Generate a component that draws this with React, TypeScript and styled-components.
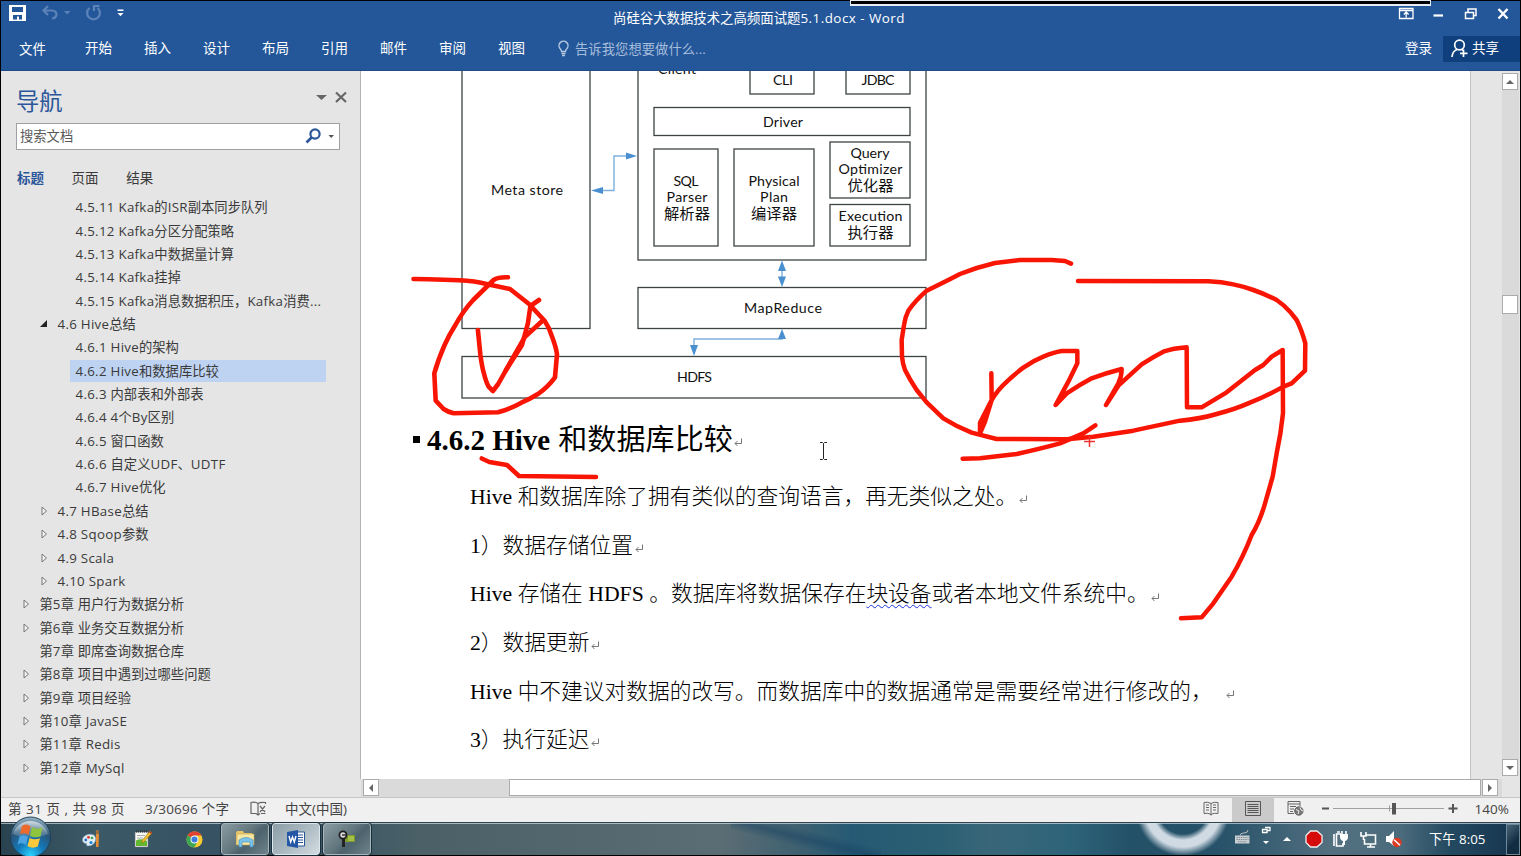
import React from 'react';
import styled, { createGlobalStyle } from 'styled-components';

const UI = '"Open Sans", "Noto Sans CJK SC", sans-serif';

const Global = createGlobalStyle`
  * { box-sizing: border-box; }
  body { margin: 0; background: #000; overflow: hidden; }
  svg { display: block; flex: none; }
`;

const Screen = styled.div`
  width: 1521px;
  height: 856px;
  padding: 1px;
  background: #000;
  display: flex;
  flex-direction: column;
  font-family: ${UI};
  font-size: 13.3px;
  color: #3a3a3a;
  white-space: nowrap;
  position: relative;
`;
const Latin = styled.span<{ $ls: number }>`
  letter-spacing: ${p => p.$ls}px;
  white-space: pre;
`;

/* ---------- header ---------- */
const Header = styled.header`
  height: 70px;
  flex: none;
  background: #24579a;
  border-bottom: 1px solid #1f4b86;
  color: #fff;
`;
const TitleBar = styled.div`
  height: 28px;
  display: flex;
  align-items: center;
  padding-left: 8px;
`;
const QuickAccess = styled.div`
  width: 604px;
  height: 28px;
  flex: none;
`;
const DocTitle = styled.div`
  width: 300px;
  padding-top: 5px;
  font-size: 13.4px;
  line-height: 20px;
`;
const WindowButtons = styled.div`
  margin: 0 4px 0 auto;
`;
const RecorderBar = styled.div`
  position: absolute;
  left: 850px;
  top: 0;
  width: 581px;
  height: 6px;
  background: #000;
  border: solid #e8edf5;
  border-width: 1px 1px 2px;
`;
const Tabs = styled.nav`
  display: flex;
  height: 41px;
  align-items: center;
  padding: 0 0 3px 18px;
`;
const Tab = styled.div<{ $w: number; $drop?: number }>`
  width: ${p => p.$w}px;
  line-height: 20px;
  font-size: 13.5px;
  padding-top: ${p => p.$drop ?? 0}px;
`;
const Tell = styled.div`
  display: flex;
  align-items: center;
  gap: 5px;
  color: #a5bcdb;
  font-size: 13.3px;
  letter-spacing: 0.05px;
  line-height: 20px;
  padding-top: 1px;
`;
const Login = styled.div`
  margin-left: auto;
  width: 38px;
  font-size: 13.5px;
  line-height: 20px;
`;
const Share = styled.div`
  width: 77px;
  height: 26px;
  margin-top: 1px;
  background: #0f3f7c;
  display: flex;
  align-items: center;
  padding-left: 8px;
  gap: 4px;
  font-size: 13.5px;
  line-height: 20px;
  padding-bottom: 1px;
`;

/* ---------- navigation pane ---------- */
const Body = styled.div`
  height: 726px;
  flex: none;
  display: flex;
  background: #e5e5e5;
`;
const Pane = styled.aside`
  width: 360px;
  height: 708px;
  flex: none;
  border-right: 1px solid #b4b4b4;
  background: #e5e5e5;
  padding-top: 16px;
`;
const PaneHead = styled.div`
  display: flex;
  align-items: center;
  height: 28px;
  padding-left: 15px;
  color: #2b579a;
  font-size: 23.3px;
  line-height: 27px;
`;
const PaneTools = styled.div`
  margin: -9px 0 0 auto;
  padding-right: 12px;
`;
const Search = styled.div`
  margin: 8px 0 0 15px;
  width: 324px;
  height: 27px;
  border: 1px solid #a0a0a0;
  background: #fff;
  display: flex;
  align-items: center;
  justify-content: space-between;
  padding: 0 4px 2px 3px;
  color: #595959;
`;
const PaneTabs = styled.div`
  display: flex;
  height: 20px;
  margin: 18px 0 0 16px;
  line-height: 20px;
`;
const PaneTab = styled.div<{ $on?: boolean }>`
  width: 54.6px;
  font-size: 13.5px;
  font-weight: ${p => (p.$on ? 700 : 400)};
  color: ${p => (p.$on ? '#2b579a' : '#3a3a3a')};
`;
const Tree = styled.div`
  margin-top: 7.5px;
`;
const Row = styled.div<{ $level: number }>`
  height: 23.36px;
  display: flex;
  align-items: center;
  padding-left: ${p => [18, 36, 54][p.$level]}px;
`;
const Mark = styled.span`
  width: 15px;
  flex: none;
`;
const RowText = styled.span<{ $on?: boolean }>`
  line-height: 22px;
  height: 22px;
  padding-left: 5.5px;
  width: ${p => (p.$on ? '256px' : 'auto')};
  background: ${p => (p.$on ? '#bed3f1' : 'transparent')};
`;

/* ---------- document ---------- */
const DocColumn = styled.div`
  width: 1141px;
  flex: none;
  display: flex;
  flex-direction: column;
`;
const Page = styled.main`
  position: relative;
  width: 1110px;
  height: 708px;
  overflow: hidden;
  background: #fff;
  border-right: 1px solid #c4c4c4;
  color: #000;
  font-family: "Liberation Serif", "Noto Sans CJK SC", serif;
`;
const Heading = styled.h3`
  margin: 6px 0 0 52px;
  height: 46px;
  display: flex;
  align-items: center;
  font-size: 29px;
  font-weight: 700;
  line-height: 46px;
`;
const Bullet = styled.span`
  width: 7px;
  height: 7px;
  margin: 0 7px 2px 0;
  background: #000;
`;
const HeadCjk = styled.span`
  font-weight: 400;
  margin-left: 8px;
  letter-spacing: 0.1px;
`;
const Paras = styled.div`
  margin-top: 10.2px;
  padding-left: 109px;
`;
const Para = styled.p`
  margin: 0;
  height: 48.6px;
  display: flex;
  align-items: center;
  font-size: 21.72px;
  line-height: 48.6px;
  white-space: pre;
  font-weight: 300;
`;
const Wavy = styled.span`
  text-decoration: underline wavy #2030d8 1.2px;
  text-underline-offset: 3px;
`;
const Ret = styled.span<{ $gap: number }>`
  margin: 5px 0 0 ${p => p.$gap}px;
`;
const Ink = styled.svg`
  position: absolute;
  left: 0;
  top: 0;
`;
const HScroll = styled.div`
  height: 18px;
  display: flex;
  padding: 0 0 0 2px;
  background: #dadada;
`;
const ScrollBtn = styled.div`
  width: 16px;
  height: 17px;
  flex: none;
  background: #fff;
  border: 1px solid #ababab;
  display: flex;
  align-items: center;
  justify-content: center;
`;
const HThumb = styled.div`
  margin: 0 1px 0 130px;
  width: 972px;
  height: 17px;
  background: #fff;
  border: 1px solid #ababab;
`;
const VScroll = styled.div`
  width: 17px;
  height: 703px;
  margin-top: 2px;
  background: #dadada;
  display: flex;
  flex-direction: column;
`;
const VThumb = styled.div`
  width: 16px;
  height: 19px;
  margin: 205px 0 auto;
  background: #fff;
  border: 1px solid #ababab;
`;

/* ---------- status bar ---------- */
const Status = styled.footer`
  height: 25px;
  flex: none;
  background: #f0f0f0;
  border-top: 1px solid #c6c6c6;
  display: flex;
  align-items: center;
  padding-left: 7px;
  color: #444;
  font-size: 13.5px;
`;
const Stat = styled.span<{ $w: number; $ls?: number }>`
  width: ${p => p.$w}px;
  letter-spacing: ${p => p.$ls ?? 0}px;
  flex: none;
  padding-bottom: 4px;
`;
const Views = styled.div`
  margin-left: auto;
  display: flex;
  height: 24px;
  align-items: center;
`;
const ViewBtn = styled.div<{ $on?: boolean }>`
  width: 42px;
  height: 24px;
  display: flex;
  align-items: center;
  justify-content: center;
  padding-bottom: 4px;
  background: ${p => (p.$on ? '#cacaca' : 'transparent')};
`;
const Zoom = styled.div`
  padding-bottom: 3px;
`;
const Percent = styled.span`
  width: 61px;
  padding: 0 0 3px 15.5px;
`;

/* ---------- taskbar ---------- */
const Taskbar = styled.div`
  height: 33px;
  flex: none;
  position: relative;
  display: flex;
  padding-left: 64px;
  border-top: 1px solid #33434d;
  box-shadow: inset 0 1px 0 rgba(215, 230, 238, 0.65);
  background:
    radial-gradient(circle at 1182px -14px, transparent 25px, rgba(222, 230, 238, 0.92) 31px, rgba(222, 230, 238, 0.92) 38px, transparent 47px),
    linear-gradient(14deg, transparent 36%, rgba(20, 62, 98, 0.45) 50%, transparent 64%) 730px 0 / 150px 100% no-repeat,
    linear-gradient(90deg, #29424f 0, #3c5967 90px, #365263 210px, #3d5865 350px, #4b6167 420px, #52666d 560px, #5b6d74 720px, #3d6070 800px, #265a74 850px, #2b5f73 940px, #396779 990px, #2d6379 1070px, #235168 1130px, #275269 1220px, #537080 1330px, #4a6b7c 1400px, #234960 1450px, #16344e 1519px);
`;
const Launch = styled.div<{ $w: number }>`
  width: ${p => p.$w}px;
  display: flex;
  align-items: center;
  justify-content: center;
`;
const TaskButton = styled.div<{ $active?: boolean }>`
  width: 48px;
  height: 32px;
  margin-right: 3px;
  border: 1px solid ${p => (p.$active ? '#dbe5ea' : '#a8b6bc')};
  outline: 1px solid #1c303b;
  outline-offset: -0.5px;
  border-radius: 3px;
  background: ${p => p.$active
    ? 'linear-gradient(135deg, #8d9ea8 0, #aebcc4 55%, #d3dce1 100%)'
    : 'linear-gradient(135deg, #8a9ba3 0, #63777f 45%, #4c626c 60%, #6f848c 100%)'};
  display: flex;
  align-items: center;
  justify-content: center;
`;
const Orb = styled.svg`
  position: absolute;
  left: 8px;
  top: -7px;
`;
const Tray = styled.div`
  margin-left: auto;
  display: flex;
  align-items: center;
  color: #fff;
`;
const Clock = styled.div`
  width: 77px;
  padding-bottom: 1px;
  font-size: 13.3px;
`;
const Peek = styled.div`
  width: 14px;
  height: 31px;
  border: 1px solid #6f8796;
  background: linear-gradient(135deg, #4a6678, #122c42 60%);
`;

type Item = [number, string, ('open' | 'closed')?];
const ITEMS: Item[] = [
  [2, '4.5.11 Kafka的ISR副本同步队列'],
  [2, '4.5.12 Kafka分区分配策略'],
  [2, '4.5.13 Kafka中数据量计算'],
  [2, '4.5.14 Kafka挂掉'],
  [2, '4.5.15 Kafka消息数据积压，Kafka消费...'],
  [1, '4.6 Hive总结', 'open'],
  [2, '4.6.1 Hive的架构'],
  [2, '4.6.2 Hive和数据库比较'],
  [2, '4.6.3 内部表和外部表'],
  [2, '4.6.4 4个By区别'],
  [2, '4.6.5 窗口函数'],
  [2, '4.6.6 自定义UDF、UDTF'],
  [2, '4.6.7 Hive优化'],
  [1, '4.7 HBase总结', 'closed'],
  [1, '4.8 Sqoop参数', 'closed'],
  [1, '4.9 Scala', 'closed'],
  [1, '4.10 Spark', 'closed'],
  [0, '第5章 用户行为数据分析', 'closed'],
  [0, '第6章 业务交互数据分析', 'closed'],
  [0, '第7章 即席查询数据仓库'],
  [0, '第8章 项目中遇到过哪些问题', 'closed'],
  [0, '第9章 项目经验', 'closed'],
  [0, '第10章 JavaSE', 'closed'],
  [0, '第11章 Redis', 'closed'],
  [0, '第12章 MySql', 'closed'],
];

/* Latin runs are set a little wider than the Chinese around them. */
const Mixed = ({ text, ls = 0.36 }: { text: string; ls?: number }) => (
  <>
    {text.split(/([\x20-\x7e]+)/).map((run, i) => (i % 2 ? <Latin key={i} $ls={ls}>{run}</Latin> : run))}
  </>
);

const ReturnMark = ({ gap = 2 }: { gap?: number }) => (
  <Ret $gap={gap}>
    <svg width="9" height="9" viewBox="0 0 9 9" fill="none" stroke="#777" strokeWidth="1">
      <path d="M7.5 0.5V5.5H1M3.5 3L1 5.5L3.5 8" />
    </svg>
  </Ret>
);

const Arrow = ({ dir }: { dir: 'up' | 'down' | 'left' | 'right' }) => {
  const d = { up: 'M0 6L4 2L8 6Z', down: 'M0 2L4 6L8 2Z', left: 'M6 0L2 4L6 8Z', right: 'M2 0L6 4L2 8Z' }[dir];
  return <svg width="8" height="8" viewBox="0 0 8 8"><path d={d} fill="#666" /></svg>;
};

const BOXES: [number, number, number, number][] = [
  [462, 40, 128, 288.5], [638, 40, 288, 220], [750, 50, 64, 44], [846, 50, 64, 44],
  [654, 107.5, 256, 28], [654, 149, 64, 97], [734, 149, 80, 97], [830, 142, 80, 56],
  [830, 204.5, 80, 41.5], [638, 287.5, 288, 41], [462, 356.5, 464, 41.5],
];
const LABELS: [number, number, string, number][] = [
  [677, 74, 'Client', 38], [783, 84.5, 'CLI', 20], [878, 84.5, 'JDBC', 33], [783, 126.5, 'Driver', 40],
  [527, 195, 'Meta store', 72], [686, 185.5, 'SQL', 25], [687, 201.5, 'Parser', 41], [687, 218.5, '解析器', 46],
  [774, 185.5, 'Physical', 51], [774, 201.5, 'Plan', 28], [774, 218.5, '编译器', 46],
  [870, 157.5, 'Query', 39], [870.5, 174, 'Optimizer', 64], [870.5, 191, '优化器', 46],
  [870.5, 221, 'Execution', 64], [870.5, 238, '执行器', 46], [783, 313, 'MapReduce', 78], [694.5, 382, 'HDFS', 35],
];

const Diagram = () => (
  <svg width="1109" height="340" viewBox="361 71 1109 340">
    <g fill="none" stroke="#3d4343" strokeWidth="1.3">
      {BOXES.map(([x, y, w, h], i) => <rect key={i} x={x} y={y} width={w} height={h} />)}
    </g>
    <g fill="none" stroke="#7db0dd" strokeWidth="1.4">
      <path d="M598 190.5H614V156H630M782 266V282M694 345V339H782V334" />
    </g>
    <path
      fill="#4a90d0"
      d="M591 190.5L603 187V194ZM637 156L626 152.500V159.500ZM782 260.500L778 271H786ZM782 287L778 276.500H786ZM694 356L690 345H698ZM782 329L778 339H786Z"
    />
    <g fontFamily='Lato, "Noto Sans CJK SC", sans-serif' fill="#111" textAnchor="middle">
      {LABELS.map(([x, y, t, w]) => (
        <text key={t} x={x} y={y} textLength={w} fontSize={/[A-Z]/.test(t) ? 14.2 : 15.3}>{t}</text>
      ))}
    </g>
  </svg>
);

const Annotations = () => (
  <Ink width="1109" height="708" viewBox="361 71 1109 708">
    <g fill="none" stroke="#f91503" strokeWidth="4.6" strokeLinecap="round" strokeLinejoin="round">
      <path d="M413.500 279L428.500 279.300L459 280.300Q475 281 487.500 284.300L510 289L529 304L544.600 320.700Q549 327 551.800 336Q556 347 557 354.300L555 377.300Q548 387 537.500 394.300Q530 399 521.400 402.700Q510 409 498 412.300L453.600 413.300Q448 412 443.600 409L435.700 400.700L434.300 373.300Q438 360 444.600 345Q449 335 455.400 325Q463 311 473.200 300L493.600 280Q498 277 508 277.300" />
      <path d="M477.900 330L480.400 355Q482 367 483.900 373.300Q486 382 488.600 386.700L492.900 391L498.200 384L510.700 361.700L525 336.700L542.500 320.700" />
      <path d="M506 370L522 345L527.900 323.300L530.400 306L539 300" />
      <path d="M481.800 458.500L489.300 462L507 465L519 476L596 477" />
    </g>
    <g transform="translate(880 240) scale(.33333)" fill="none" stroke="#f91503" strokeWidth="13.500" strokeLinecap="round" strokeLinejoin="round">
      <path d="M573 71L555 63L515 60H420L345 69Q290 82 240 102L205 120L140 152Q105 183 85 212Q75 232 72 255L65 300L66 350Q68 372 75 390Q90 420 110 450L140 487L190 535Q230 560 275 578L350 597L560 598L640 590L760 572L900 542Q960 537 1010 522Q1065 508 1110 488Q1165 466 1210 440L1235 430L1275 392L1276 310Q1265 270 1250 240L1230 215Q1212 195 1190 180Q1155 162 1120 150Q1090 139 1060 133Q1025 125 985 124L594 123" />
      <path d="M334 400L335 480L315 545L300 580V548L335 480Q353 450 375 430Q400 405 430 383Q460 362 490 350Q520 337 545 333H592V370L565 425L527 495L560 460Q600 434 635 415Q675 400 725 387Q725 410 715 430L678 495L715 437L785 373Q820 350 850 335Q880 325 920 322L921 502H965L1040 457L1125 390L1150 375L1175 350L1208 330L1209 520Q1203 580 1190 640L1178 710L1158 780Q1141 843 1115 885Q1090 950 1055 1010L1000 1090L965 1132L903 1135" />
      <path d="M248 656L300 655L410 642Q485 625 540 610L610 580L646 556" />
    </g>
    <path d="M1084 441.500H1095M1089.500 436V447" stroke="#e33" strokeWidth="1.500" />
    <path d="M820 442.500H822.500L823.500 443.500L824.500 442.500H827M823.500 443.500V458.500M820 459.500H822.500L823.500 458.500L824.500 459.500H827" fill="none" stroke="#222" />
  </Ink>
);

const QuickIcons = () => (
  <svg width="130" height="28" viewBox="9 1 130 28">
    <path fill="#fff" d="M9 5H26V21H9Z" />
    <path fill="#24579a" d="M12 7H23V12H12ZM13 15H22V19.500H19V16.500H17V19.500H13Z" />
    <g fill="none" stroke="#5c83b8" strokeWidth="2.200">
      <path d="M48 6L43.500 10.500L48 15M44 10.500H52Q56.500 11 56.500 14.500Q56 18 52 18.500" />
      <path d="M89.500 8A6.400 6.400 0 1 0 97.500 8M94 11V6H99.500" />
    </g>
    <path fill="#5c83b8" d="M64 11H70.500L67.200 14.500Z" />
    <path fill="#fff" d="M117.500 9.500H123.500V11H117.500ZM117.500 13H123.500L120.500 16.300Z" />
  </svg>
);

const CaptionIcons = () => (
  <svg width="118" height="28" viewBox="1398 1 118 28" fill="none" stroke="#fff">
    <path d="M1399.500 8.500H1413V18.500H1399.500ZM1399.500 10.500H1413M1406.200 17.500V12.500M1403.800 14.500L1406.200 12L1408.600 14.500" strokeWidth="1.300" />
    <path d="M1433.500 15.500H1443" strokeWidth="2.200" />
    <path d="M1465.500 12.500H1473.500V18.500H1465.500ZM1468 12V9H1476V15.500H1474" strokeWidth="1.500" />
    <path d="M1498.500 9L1507.500 18.500M1507.500 9L1498.500 18.500" strokeWidth="2.400" />
  </svg>
);

const StartOrb = () => (
  <Orb width="43" height="40" viewBox="0 0 43 40">
    <defs>
      <radialGradient id="orb" cx=".5" cy=".95" r=".95">
        <stop offset="0" stopColor="#2ad2ff" /><stop offset=".35" stopColor="#1478b8" />
        <stop offset=".7" stopColor="#2a5578" /><stop offset="1" stopColor="#9db8c8" />
      </radialGradient>
      <linearGradient id="gloss" x1="0" y1="0" x2="0" y2="1">
        <stop offset="0" stopColor="#fff" stopOpacity=".65" /><stop offset="1" stopColor="#fff" stopOpacity=".08" />
      </linearGradient>
    </defs>
    <circle cx="21.500" cy="21" r="20" fill="url(#orb)" stroke="#1f4258" />
    <path d="M4 18A18 17 0 0 1 39 18Q21 26 4 18Z" fill="url(#gloss)" />
    <path d="M13 10Q18 7 21.500 10.500L19.500 19Q15.500 16 11 18.500Z" fill="#ee6a2c" />
    <path d="M23 11Q27.500 14 33.500 11.500L31.500 20.500Q26 22.500 21 19.700Z" fill="#8fc43f" />
    <path d="M10.500 20.500Q15 18 19 21L17 29Q13 26 8.500 28.500Z" fill="#4ba3e3" />
    <path d="M20.500 22Q25.500 24.500 31 22.300L28.800 30.500Q23 33 18.500 30Z" fill="#fcc93a" />
  </Orb>
);

const PaintIcon = () => (
  <svg width="18" height="18" viewBox="0 0 18 18">
    <path d="M0.500 11C0 5 7 3 12 5Q15 8 13 12Q11 16 6 16Q4 16 4.500 13.500Q2 14 0.500 11Z" fill="#e2eef6" stroke="#7a9cb0" strokeWidth=".6" />
    <circle cx="3.800" cy="10" r="1.400" fill="#2970c8" /><circle cx="6.500" cy="7.300" r="1.400" fill="#d33a2a" />
    <circle cx="10" cy="8" r="1.300" fill="#3fa548" /><circle cx="9" cy="12.500" r="1.600" fill="#1c84d6" />
    <path d="M14 1L16 .5L17 5L16.500 17H14Z" fill="#e58c34" /><path d="M13.700 0H16.800V4H14Z" fill="#9b6d44" />
  </svg>
);
const NoteIcon = () => (
  <svg width="18" height="18" viewBox="0 0 18 18">
    <path d="M1 2H14V17H1Z" fill="#f8faf6" stroke="#667" strokeWidth=".6" />
    <path d="M2 1.500H14" stroke="#333" strokeWidth="2" strokeDasharray="1 1" />
    <path d="M3 5.500H11M3 8H9" stroke="#aaa" />
    <path d="M2 10.500Q7 8 13 11V16H2Z" fill="#63b72f" />
    <path d="M16 1L18 3L10 12L7.500 13L8.500 10Z" fill="#f5bd27" stroke="#8b6411" strokeWidth=".5" />
    <path d="M16 1L18 3L17 4L15 2Z" fill="#b4322b" />
  </svg>
);
const ChromeIcon = () => (
  <svg width="17" height="17" viewBox="0 0 18 18">
    <circle cx="9" cy="9" r="8.500" fill="#f7cb2f" />
    <path d="M9 9L1.600 4.800A8.500 8.500 0 0 1 16.400 4.800H9Z" fill="#df4132" />
    <path d="M9 9L1.600 4.800A8.500 8.500 0 0 0 8.500 17.500L12.500 11Z" fill="#3ba653" />
    <circle cx="9" cy="9" r="4.200" fill="#f3f6fa" /><circle cx="9" cy="9" r="3.200" fill="#3d7de0" />
  </svg>
);
const FolderIcon = () => (
  <svg width="20" height="18" viewBox="0 0 20 18">
    <path d="M1 3L2 1H8L9 3H17V15H1Z" fill="#e9c765" /><path d="M2 4H19V15H2Z" fill="#f7e7a4" stroke="#c9a24a" strokeWidth=".6" />
    <path d="M4 17V10Q11 5 18 10V17H15V12H7V17Z" fill="#7cc4ec" stroke="#3b8cc0" strokeWidth=".6" />
  </svg>
);
const WordIcon = () => (
  <svg width="18" height="18" viewBox="0 0 18 18">
    <path d="M9 2H17.500V16H9Z" fill="#fff" stroke="#2b579a" />
    <path d="M11 5H16M11 7.500H16M11 10H16M11 12.500H16" stroke="#2b579a" strokeWidth="1.200" />
    <path d="M0 2L11 0V18L0 16Z" fill="#2357a5" />
    <path d="M2 6L3.700 12L5.500 7L7.300 12L9 6" fill="none" stroke="#fff" strokeWidth="1.400" />
  </svg>
);
const ToolIcon = () => (
  <svg width="18" height="18" viewBox="0 0 18 18">
    <path d="M7 5H17V12H7Z" fill="#7d9c2c" /><path d="M10 6H16V11H10Z" fill="#a3bf45" />
    <path d="M4 8H7V17H4Z" fill="#222" /><circle cx="5" cy="5" r="3.600" fill="#ddd" stroke="#1d1d1d" strokeWidth="1.700" />
    <path d="M4 5H8" stroke="#333" strokeWidth="1.500" />
  </svg>
);

const TrayIcons = () => (
  <svg width="195" height="32" viewBox="1234 823 195 32">
    <path d="M1235 835.500H1249.500V843.500H1235Z" fill="#c9cfd2" />
    <path d="M1236.500 837.500H1248.500M1236.500 839.500H1248.500M1238 841.700H1247" stroke="#6b777d" strokeWidth=".8" strokeDasharray="1.400 .8" />
    <path d="M1240 835.500Q1240 833 1244 833T1248 830" fill="none" stroke="#bbb" />
    <path d="M1262.500 829.500H1267V832.500H1262.500ZM1265 827.500H1270V830.500H1267" fill="none" stroke="#fff" strokeWidth="1.300" />
    <path d="M1263 841H1269L1266 844ZM1283 841H1291L1287 837Z" fill="#fff" />
    <path d="M1310.500 831H1317L1322 835.500V842.500L1317 847H1310.500L1306 842.500V835.500Z" fill="#d60b0b" stroke="#eee" strokeWidth="1.300" />
    <g fill="none" stroke="#fff" strokeWidth="1.600">
      <path d="M1341 834H1336.500V846H1343V843M1334 834V846M1337 832H1340" />
      <path d="M1342 831V834M1346 831V834" />
      <path d="M1365 835H1375.500V844H1364.500V839M1367 847H1375M1370.500 844V847M1361 832V836H1366V832M1363.500 836V840" />
    </g>
    <path d="M1340 834H1348V837Q1348 840 1345 841V845H1343V841Q1340 840 1340 837Z" fill="#fff" />
    <path d="M1386 836H1389L1394 831V846L1389 842H1386Z" fill="#fff" />
    <circle cx="1397" cy="842.500" r="4.700" fill="#dd3a24" /><path d="M1394 839.800L1400 845.200" stroke="#fff" strokeWidth="1.500" />
  </svg>
);

export default function App() {
  return (
    <Screen>
      <Global />
      <Header>
        <TitleBar>
          <QuickAccess><QuickIcons /></QuickAccess>
          <DocTitle><Mixed text="尚硅谷大数据技术之高频面试题5.1.docx - Word" ls={0.47} /></DocTitle>
          <WindowButtons><CaptionIcons /></WindowButtons>
        </TitleBar>
        <Tabs>
          <Tab $w={66} $drop={1}>文件</Tab>
          {['开始', '插入', '设计', '布局', '引用', '邮件', '审阅', '视图'].map(t => <Tab key={t} $w={59}>{t}</Tab>)}
          <Tell>
            <svg width="13" height="17" viewBox="0 0 13 17" fill="none" stroke="#b5c8e2" strokeWidth="1.400">
              <path d="M4.500 11.500Q4.500 10 3 8.500A4.500 4.500 0 1 1 10 8.500Q8.500 10 8.500 11.500ZM4.500 13.500H8.500M5 15.500H8" />
            </svg>
            告诉我您想要做什么...
          </Tell>
          <Login>登录</Login>
          <Share>
            <svg width="17" height="19" viewBox="0 0 17 19" fill="none" stroke="#fff" strokeWidth="1.700">
              <circle cx="8.500" cy="6" r="4.800" /><path d="M1 18Q1.500 12 6 10.500M10.500 10L12 11.500M12.500 10.500V18M9 14.300H16.500" />
            </svg>
            共享
          </Share>
        </Tabs>
        <RecorderBar />
      </Header>

      <Body>
        <Pane>
          <PaneHead>
            导航
            <PaneTools>
              <svg width="32" height="14" viewBox="0 0 32 14">
                <path d="M0 5H11L5.500 10Z" fill="#666" /><path d="M20 2.500L30 12M30 2.500L20 12" stroke="#666" strokeWidth="2.200" />
              </svg>
            </PaneTools>
          </PaneHead>
          <Search>
            搜索文档
            <svg width="30" height="17" viewBox="0 0 30 17">
              <circle cx="10" cy="7" r="4.600" fill="none" stroke="#2b579a" strokeWidth="2.200" />
              <path d="M6.500 10.500L1.500 15.500" stroke="#2b579a" strokeWidth="2.600" /><path d="M23.500 8H29L26.200 11Z" fill="#555" />
            </svg>
          </Search>
          <PaneTabs>
            <PaneTab $on>标题</PaneTab><PaneTab>页面</PaneTab><PaneTab>结果</PaneTab>
          </PaneTabs>
          <Tree>
            {ITEMS.map(([level, text, state]) => (
              <Row key={text} $level={level}>
                <Mark>
                  {state === 'closed' && <svg width="12" height="10" viewBox="0 0 12 10"><path d="M5 1L9.500 5L5 9Z" fill="#f2f2f2" stroke="#777" /></svg>}
                  {state === 'open' && <svg width="12" height="10" viewBox="0 0 12 10"><path d="M10 1V8H3Z" fill="#222" /></svg>}
                </Mark>
                <RowText $on={text.startsWith('4.6.2')}><Mixed text={text} ls={0.3} /></RowText>
              </Row>
            ))}
          </Tree>
        </Pane>

        <DocColumn>
          <Page>
            <Diagram />
            <Heading><Bullet />4.6.2 Hive<HeadCjk>和数据库比较</HeadCjk><ReturnMark gap={1} /></Heading>
            <Paras>
              <Para>Hive 和数据库除了拥有类似的查询语言，再无类似之处。<ReturnMark /></Para>
              <Para>1）数据存储位置<ReturnMark /></Para>
              <Para>Hive 存储在 HDFS 。数据库将数据保存在<Wavy>块设备</Wavy>或者本地文件系统中。<ReturnMark /></Para>
              <Para>2）数据更新<ReturnMark /></Para>
              <Para>Hive 中不建议对数据的改写。而数据库中的数据通常是需要经常进行修改的，<ReturnMark gap={13} /></Para>
              <Para>3）执行延迟<ReturnMark /></Para>
            </Paras>
            <Annotations />
          </Page>
          <HScroll>
            <ScrollBtn><Arrow dir="left" /></ScrollBtn>
            <HThumb />
            <ScrollBtn><Arrow dir="right" /></ScrollBtn>
          </HScroll>
        </DocColumn>
        <VScroll>
          <ScrollBtn><Arrow dir="up" /></ScrollBtn>
          <VThumb />
          <ScrollBtn><Arrow dir="down" /></ScrollBtn>
        </VScroll>
      </Body>

      <Status>
        <Stat $w={137} $ls={0.5}>第 31 页 , 共 98 页</Stat>
        <Stat $w={105} $ls={0.25}>3/30696 个字</Stat>
        <Stat $w={35}>
          <svg width="17" height="15" viewBox="0 0 17 15" fill="none" stroke="#666" strokeWidth="1.200">
            <path d="M8 2.500Q5 .5 1 1.500V12.500H6L8 14L10 12.500M8 2.500V14M8 2.500Q10 1 15.500 1.500V3M10 5L15 11M15 5L10 11M15.500 12.500H11" />
          </svg>
        </Stat>
        <Stat $w={80}>中文(中国)</Stat>
        <Views>
          <ViewBtn>
            <svg width="16" height="15" viewBox="0 0 16 15" fill="none" stroke="#666">
              <path d="M8 2.500Q5 .5 1 1.500V12.500Q5 11.500 8 13.500Q11 11.500 15 12.500V1.500Q11 .5 8 2.500V14.500M3 4H6M3 6.500H6M3 9H6M10 4H13M10 6.500H13M10 9H13" />
            </svg>
          </ViewBtn>
          <ViewBtn $on>
            <svg width="16" height="15" viewBox="0 0 16 15" fill="none" stroke="#555">
              <path d="M.5 .5H15.500V14.500H.5ZM2.500 3.500H13.500M2.500 5.500H13.500M2.500 7.500H13.500M2.500 9.500H13.500M2.500 11.500H13.500" />
            </svg>
          </ViewBtn>
          <ViewBtn>
            <svg width="17" height="15" viewBox="0 0 17 15" fill="none" stroke="#666">
              <path d="M7 12.500H1V.5H13V5M1 3H13M3 5.500H9M3 8H7M3 10.500H6" />
              <circle cx="11.800" cy="10" r="4.200" fill="#777" /><path d="M9 8.500L12 10L11 13M13 6.500L14 9L16 10" stroke="#eee" />
            </svg>
          </ViewBtn>
          <Zoom>
            <svg width="143" height="15" viewBox="0 0 143 15">
              <path d="M6 7.500H13" stroke="#555" strokeWidth="2" /><path d="M17 7.500H128" stroke="#a0a0a0" />
              <path d="M73.500 4.500V10.500" stroke="#999" /><path d="M76 2H80V13.500H76Z" fill="#555" />
              <path d="M132.500 7.500H141.500M137 3V12" stroke="#555" strokeWidth="2" />
            </svg>
          </Zoom>
          <Percent>140%</Percent>
        </Views>
      </Status>

      <Taskbar>
        <StartOrb />
        <Launch $w={52}><PaintIcon /></Launch>
        <Launch $w={51}><NoteIcon /></Launch>
        <Launch $w={53}><ChromeIcon /></Launch>
        <TaskButton><FolderIcon /></TaskButton>
        <TaskButton $active><WordIcon /></TaskButton>
        <TaskButton><ToolIcon /></TaskButton>
        <Tray>
          <TrayIcons />
          <Clock>下午 8:05</Clock>
          <Peek />
        </Tray>
      </Taskbar>
    </Screen>
  );
}
